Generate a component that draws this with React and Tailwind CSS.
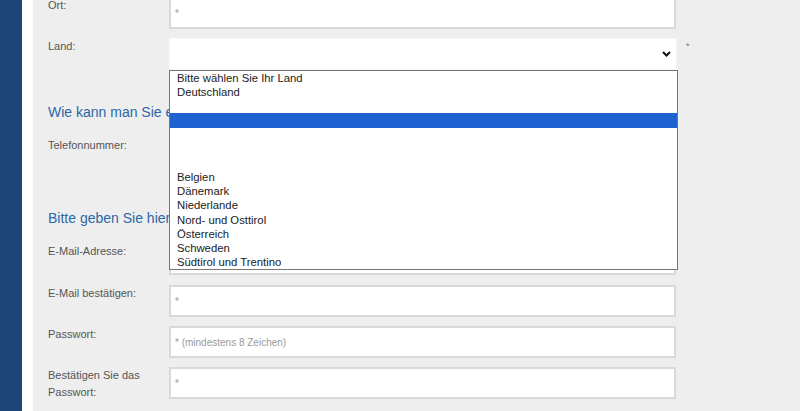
import React from 'react';

const LAENDER = [
  'Bitte wählen Sie Ihr Land',
  'Deutschland',
  '',
  '__sel',
  '',
  '',
  '',
  'Belgien',
  'Dänemark',
  'Niederlande',
  'Nord- und Osttirol',
  'Österreich',
  'Schweden',
  'Südtirol und Trentino',
];

function Eingabe({ placeholder = '*' }) {
  return (
    <div className="w-[507px] h-[32px] bg-white border-2 border-[#d9d9d9] px-[4px] flex items-center text-[10px] text-[#9a9a9a]">
      {placeholder}
    </div>
  );
}

function Feld({ label, placeholder, className = '' }) {
  return (
    <div className={`flex ${className}`}>
      <label className="w-[121px] shrink-0 pt-[1px] text-[11px] leading-[14px] text-[#555]">{label}</label>
      <Eingabe placeholder={placeholder} />
    </div>
  );
}

function LandAuswahl() {
  return (
    <div className="flex mt-[9px]">
      <label className="w-[121px] shrink-0 pt-[1px] text-[11px] leading-[14px] text-[#555]">Land:</label>
      <div className="relative w-[508px] h-[32px] bg-white border border-[#f7f7f7]">
        <svg className="absolute right-[5px] top-[12px]" width="9" height="6" viewBox="0 0 9 6">
          <path d="M1 1l3.5 3.5L8 1" fill="none" stroke="#111" strokeWidth="2" />
        </svg>
        <div className="absolute left-[-1px] top-[31px] w-[509px] bg-white border border-[#767676] z-10">
          {LAENDER.map((l, i) =>
            l === '__sel' ? (
              <div key={i} className="h-[14.17px] bg-[#1d62d0]" />
            ) : (
              <div key={i} className="h-[14.17px] pl-[7px] text-[11.3px] leading-[14px] text-[#222]">{l}</div>
            )
          )}
        </div>
      </div>
      <span className="ml-[9px] mt-[1px] text-[9px] text-[#777] leading-[14px]">*</span>
    </div>
  );
}

export default function App() {
  return (
    <div className="flex h-[411px] w-[800px] overflow-hidden font-['Liberation_Sans',Arial,sans-serif]">
      <div className="w-[22px] shrink-0 bg-[#1b4677]" />
      <div className="w-[11px] shrink-0 bg-white" />
      <div className="flex-1 bg-[#eeeeee] pl-[15px]">
        <div className="-mt-[3px]">
          <Feld label="Ort:" />
          <LandAuswahl />

          <h3 className="mt-[32px] text-[14px] leading-[20px] text-[#2b67a6]">Wie kann man Sie erreichen?</h3>
          <Feld label="Telefonnummer:" placeholder="" className="mt-[15px]" />

          <h3 className="mt-[39px] text-[14px] leading-[20px] text-[#2b67a6]">Bitte geben Sie hier Ihre Zugangsdaten ein</h3>
          <Feld label="E-Mail-Adresse:" className="mt-[15px]" />
          <Feld label="E-Mail bestätigen:" className="mt-[10px]" />
          <Feld label="Passwort:" placeholder="* (mindestens 8 Zeichen)" className="mt-[9px]" />
          <div className="flex mt-[9px]">
            <label className="w-[121px] shrink-0 text-[11px] leading-[17px] text-[#555]">
              Bestätigen Sie das
              <br />
              Passwort:
            </label>
            <Eingabe />
          </div>
        </div>
      </div>
    </div>
  );
}
